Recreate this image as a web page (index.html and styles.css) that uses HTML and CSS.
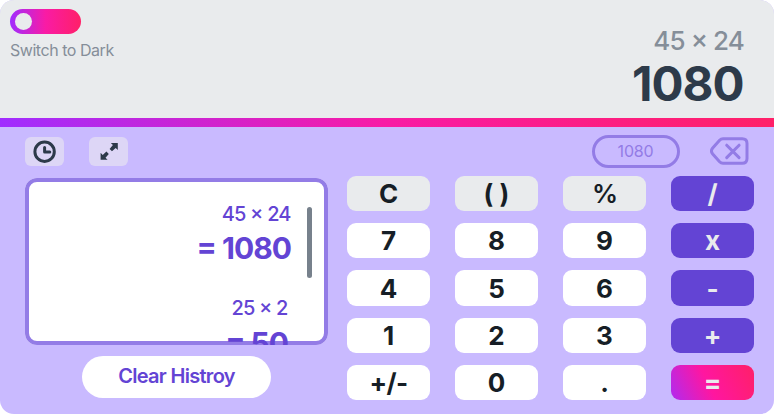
FILE: index.html
```html
<!DOCTYPE html>
<html lang="en">
<head>
<meta charset="utf-8">
<title>Calculator</title>
<link rel="stylesheet" href="styles.css">
</head>
<body>
<main class="calculator">
  <header class="display">
    <div class="theme">
      <button class="toggle" aria-label="Theme"><span class="knob"></span></button>
      <div class="theme-label">Switch to Dark</div>
    </div>
    <div class="readout">
      <div class="expression">45 × 24</div>
      <div class="result">1080</div>
    </div>
  </header>
  <div class="divider"></div>
  <section class="body">
    <div class="toolbar">
      <button class="tool" aria-label="History">
        <svg width="24" height="24" viewBox="0 0 24 24" fill="none" stroke="currentColor"><circle cx="11.6" cy="11.7" r="9.7" stroke-width="3"/><path d="M11.6 7.4V12h5.2" stroke-width="3" stroke-linecap="round" stroke-linejoin="round"/></svg>
      </button>
      <button class="tool" aria-label="Resize">
        <svg width="20" height="20" viewBox="0 0 20 20" fill="currentColor"><path d="M11.8 1h7v7l-2.1-2.1-3.7 3.4-2.4-2.4 3.3-3.8z"/><path d="M8.6 17.8h-7v-7l2.1 2.1 3.7-3.4 2.4 2.4-3.3 3.8z"/></svg>
      </button>
      <div class="preview">1080</div>
      <button class="erase" aria-label="Backspace">
        <svg width="40" height="28" viewBox="0 0 40 28" fill="none" stroke="currentColor" stroke-width="3" stroke-linecap="round" stroke-linejoin="round"><path d="M13 1.7h19.2q4.8 0 4.8 4.8v15q0 4.8-4.8 4.8H13q-2 0-3.4-1.5L2.7 17q-2.5-3 0-6l6.9-7.8Q11 1.7 13 1.7z"/><path d="M16.7 8.2l12.4 12.4M29.1 8.2L16.7 20.6"/></svg>
      </button>
    </div>
    <div class="columns">
      <div class="side">
        <div class="history">
          <div class="entries">
            <div class="entry"><div class="sum">45 × 24</div><div class="answer">= 1080</div></div>
            <div class="entry second"><div class="sum">25 × 2</div><div class="answer">= 50</div></div>
          </div>
          <div class="scrollbar"></div>
        </div>
        <button class="clear">Clear Histroy</button>
      </div>
      <div class="keys">
        <button class="key fn">C</button><button class="key fn">( )</button><button class="key fn percent">%</button><button class="key op">/</button>
        <button class="key">7</button><button class="key">8</button><button class="key">9</button><button class="key op">x</button>
        <button class="key">4</button><button class="key">5</button><button class="key">6</button><button class="key op">-</button>
        <button class="key">1</button><button class="key">2</button><button class="key">3</button><button class="key op">+</button>
        <button class="key sign">+/-</button><button class="key">0</button><button class="key">.</button><button class="key op equals">=</button>
      </div>
    </div>
  </section>
</main>
</body>
</html>
```
FILE: styles.css
```css
* { box-sizing: border-box; }
body { margin: 0; background: #fff; font-family: Inter, "Liberation Sans", sans-serif; }
button { border: 0; padding: 0; margin: 0; font-family: inherit; }
svg { display: block; }

.calculator { width: 774px; height: 414px; border-radius: 14px; overflow: hidden; background: #c9baff; }

.display { height: 118px; background: #e9ebed; display: flex; justify-content: space-between; padding: 9px 30px 0 10px; }
.toggle { display: flex; align-items: center; width: 71px; height: 25px; padding-left: 5px; border-radius: 13px; background: linear-gradient(90deg, #a02dff, #f91ba5 50%, #ff2068); }
.knob { width: 17px; height: 17px; border-radius: 50%; background: #e9ebed; }
.theme-label { margin-top: 6px; font-size: 16px; line-height: 20px; letter-spacing: -0.46px; color: #858e99; white-space: nowrap; }
.readout { text-align: right; padding-top: 16px; }
.expression { font-size: 26px; line-height: 32px; font-weight: 450; letter-spacing: -0.9px; color: #858e99; font-feature-settings: "calt" 1; }
.result { font-size: 47.5px; line-height: 54px; font-weight: 700; letter-spacing: -1px; margin-right: 0.5px; color: #2d3a4a; }

.divider { height: 9px; background: linear-gradient(90deg, #a02dff, #f91ba5 50%, #ff2068); }

.body { padding: 8px 20px 0 25px; }
.toolbar { display: flex; height: 33px; }
.tool { display: flex; align-items: center; justify-content: center; width: 39px; height: 29px; margin: 2px 25px 0 0; border-radius: 6px; background: #ddd6f6; color: #2d3a4a; }
.preview { width: 88px; height: 33px; margin-left: auto; border: 3px solid #937ce6; border-radius: 17px; font-size: 16px; line-height: 27px; letter-spacing: -0.2px; text-align: center; color: #937ce6; }
.erase { margin: 2px 4px 0 30.5px; height: 28px; background: none; color: #937ce6; }

.columns { display: flex; justify-content: space-between; padding-top: 8px; }
.side { display: flex; flex-direction: column; align-items: center; padding-top: 2px; }
.history { display: flex; width: 303px; height: 167px; overflow: hidden; border-radius: 12px; background: #fff; box-shadow: inset 0 0 0 4px #937ce6; color: #6344d4; }
.entries { flex: 1; padding-top: 24px; text-align: right; font-feature-settings: "calt" 1; }
.entry { height: 94px; }
.sum { font-size: 20px; line-height: 24px; font-weight: 450; letter-spacing: -0.9px; word-spacing: 0.2px; margin-right: 0.5px; }
.answer { margin-top: 4px; font-size: 30px; line-height: 36px; font-weight: 700; letter-spacing: -1px; }
.second { padding-right: 3px; }
.second .answer { margin-top: 5px; }
.scrollbar { width: 5px; height: 71px; margin: 29px 16px 0; border-radius: 3px; background: #77818c; }
.clear { width: 189px; height: 42px; margin-top: 11px; border-radius: 21px; background: #fff; color: #6344d4; font-size: 20px; line-height: 40px; padding-bottom: 2px; font-weight: 600; letter-spacing: -0.7px; }

.keys { display: grid; grid-template-columns: repeat(4, 83px); grid-auto-rows: 35.2px; gap: 12.05px 25px; }
.key { border-radius: 9px; background: #fff; color: #161e26; font-size: 26px; line-height: 35px; font-weight: 700; }
.fn { background: #e9ebed; }
.percent { font-weight: 600; letter-spacing: -1px; }
.sign { letter-spacing: -0.6px; }
.op { background: #6344d4; color: #e9ebed; }
.equals { background: linear-gradient(65deg, #b02bf0, #ff16a0 45%, #ff2068); }
```
